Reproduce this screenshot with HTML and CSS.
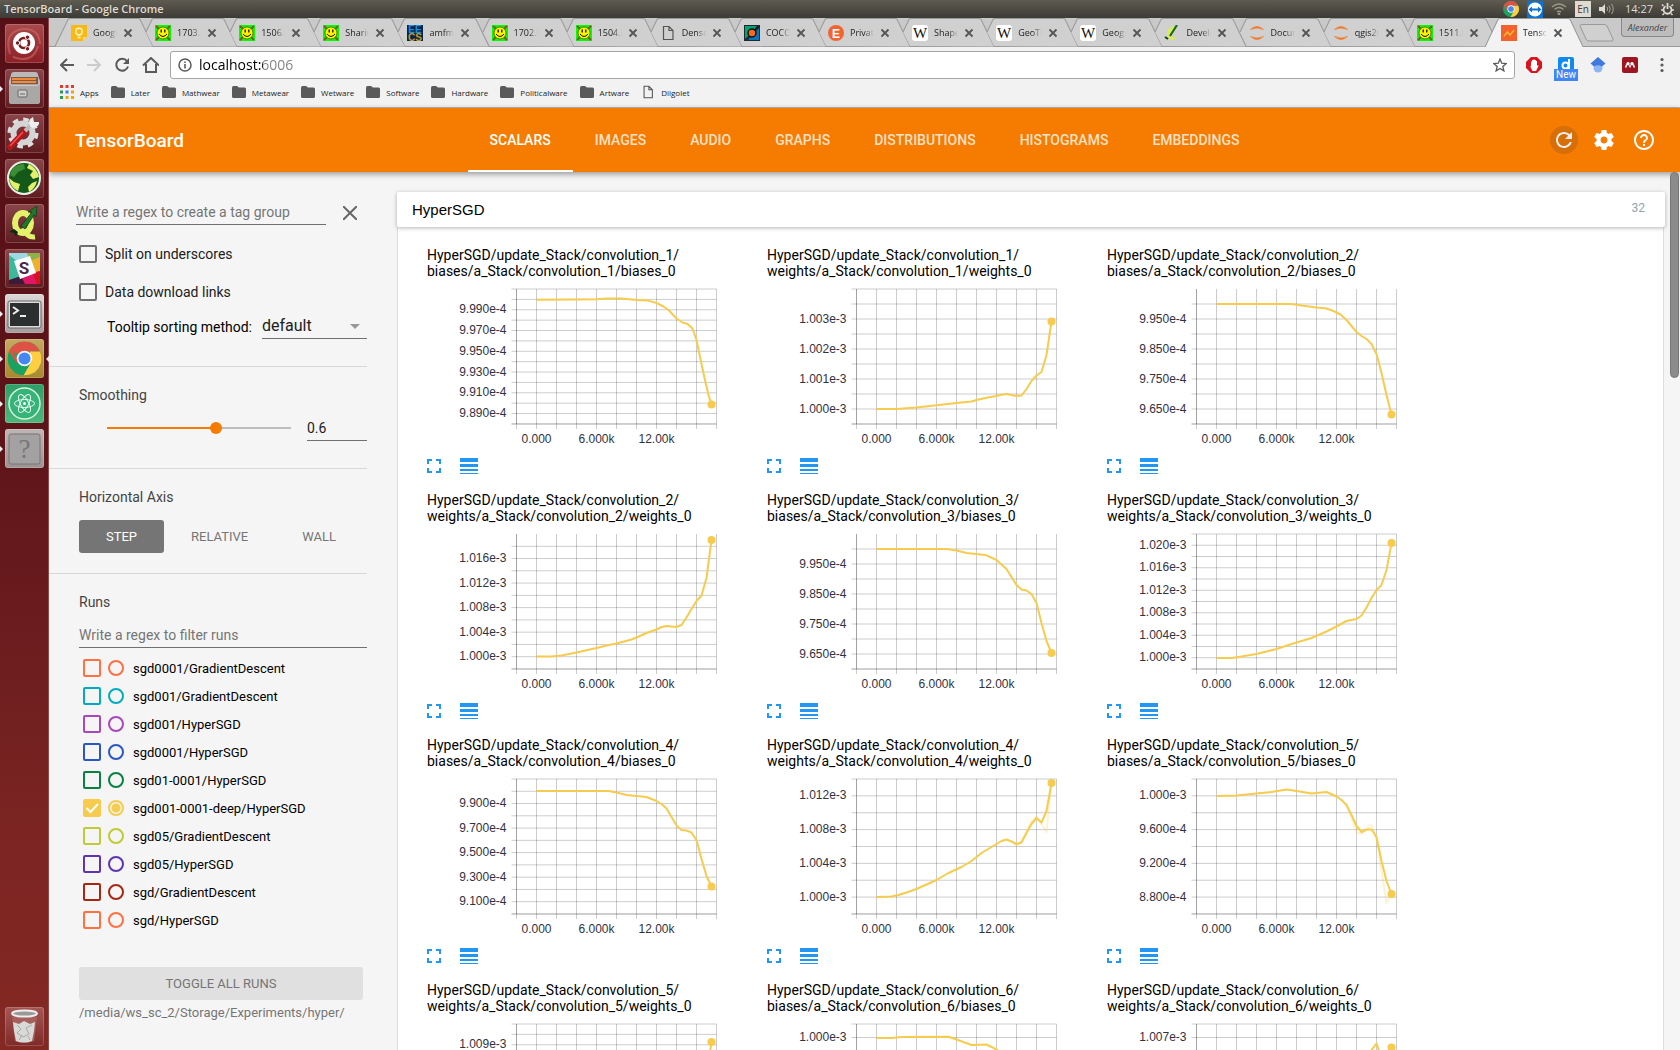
FILE: index.html
```html
<!DOCTYPE html>
<html lang="en">
<head>
<meta charset="utf-8">
<title>TensorBoard</title>
<link rel="stylesheet" href="styles.css">
</head>
<body>
<svg class="symbols" aria-hidden="true">
  <symbol id="tab-first" viewBox="0 0 98 29" preserveAspectRatio="none"><path d="M0 28.500 13 1.500Q13.500.500 15 .500H83Q84.500.500 85 1.500L98 28.500" fill="#d0d0d0" stroke="#999"/></symbol>
  <symbol id="tab" viewBox="0 0 98 29" preserveAspectRatio="none"><path d="M14 28 7 14 13 1.500Q13.500.500 15 .500H83Q84.500.500 85 1.500L98 28.500Z" fill="#d0d0d0"/><path d="M7 14 13 1.500Q13.500.500 15 .500H83Q84.500.500 85 1.500L98 28.500" fill="none" stroke="#999"/></symbol>
  <symbol id="tab-active" viewBox="0 0 98 29" preserveAspectRatio="none"><path d="M0 29 13 1.500Q13.500.500 15 .500H83Q84.500.500 85 1.500L98 29" fill="#f2f2f2" stroke="#999"/></symbol>
  <symbol id="cross" viewBox="0 0 10 10"><path d="M1.500 1.500 8.500 8.500M8.500 1.500 1.500 8.500" stroke="#555" stroke-width="1.800"/></symbol>
  <symbol id="fav-keep" viewBox="0 0 16 16"><path d="M0 0H16V12L12 16H0Z" fill="#f7b912"/><path d="M12 16V12H16Z" fill="#f9d779"/><circle cx="8" cy="6.500" r="3.200" fill="none" stroke="#fff3c8" stroke-width="1.400"/><path d="M6.500 10H9.500M6.500 12.500H9.500" stroke="#fff3c8" stroke-width="1.400"/></symbol>
  <symbol id="fav-arxiv" viewBox="0 0 16 16"><rect width="16" height="16" fill="#0f0"/><path d="M1 1 4 4M15 1 12 4M1 15 4 12M15 15 12 12" stroke="#7a5a20" stroke-width="2"/><circle cx="8" cy="8" r="6" fill="#fff200" stroke="#554400" stroke-width=".7"/><path d="M6.200 4.500V7.500M9.800 4.500V7.500" stroke="#111" stroke-width="1.300"/><path d="M4 9Q8 14 12 9" fill="none" stroke="#111"/></symbol>
  <symbol id="fav-page" viewBox="0 0 16 16"><path d="M3.500 1.500H9L13 5.500V14.500H3.500ZM9 1.500V5.500H13" fill="none" stroke="#555" stroke-width="1.200"/></symbol>
  <symbol id="fav-coco" viewBox="0 0 16 16"><rect width="16" height="16" fill="#1c2b33"/><path d="M1 1H14L1 14Z" fill="#00a66c"/><path d="M15 3V15H4Z" fill="#0a74b8"/><circle cx="8" cy="8" r="4" fill="#f26a21" stroke="#111" stroke-width="1.500"/><path d="M10.500 5.500 14 1" stroke="#111" stroke-width="1.500"/></symbol>
  <symbol id="fav-w" viewBox="0 0 16 16"><rect width="16" height="16" rx="3" fill="#fff"/><text x="8" y="13" text-anchor="middle" font-family="Liberation Serif, serif" font-size="15" fill="#111">W</text></symbol>
  <symbol id="fav-qgis" viewBox="0 0 16 16"><path d="M10 1Q3 3 3 9Q3 14 8 15Q13 14 11 12Q7 13 8 9Q9 5 12 3Z" fill="#d9ec5b"/><path d="M13 0 6 11" stroke="#1c6b1c" stroke-width="2.200"/><path d="M1 12 4 14" stroke="#143c14" stroke-width="2"/></symbol>
  <symbol id="fav-jupyter" viewBox="0 0 16 16"><path d="M1.500 4.500Q8-1.500 14.500 4.500Q8 1.500 1.500 4.500ZM1.500 11.500Q8 17.500 14.500 11.500Q8 14.500 1.500 11.500Z" fill="#f37726" stroke="#f37726" stroke-width=".6"/></symbol>
  <symbol id="fav-tb" viewBox="0 0 16 16"><rect width="16" height="16" fill="#f3622b"/><path d="M3 11 6.500 7 9 10 13 5" fill="none" stroke="#ffb733" stroke-width="1.500"/></symbol>
  <symbol id="folder" viewBox="0 0 14 12"><path d="M0 2Q0 0 1.500 0H5L7 1.500H12.500Q14 1.500 14 3V10.500Q14 12 12.500 12H1.500Q0 12 0 10.500Z" fill="#5a5a5a"/></symbol>
  <symbol id="chrome" viewBox="0 0 34 34"><circle cx="17" cy="17" r="17" fill="#1aa260"/><path d="M2.300 8.500A17 17 0 0 1 31.700 8.500L31.700 10H17L10 13Z" fill="#de5246"/><path d="M32.500 10A17 17 0 0 1 16 34L24 20 22 10Z" fill="#ffcd40"/><path d="M2.300 8.500 10.500 21" stroke="#de5246" stroke-width="3"/><circle cx="17" cy="17" r="7.800" fill="#f5f5f5"/><circle cx="17" cy="17" r="6" fill="#4587f3"/></symbol>
</svg>

<header class="panel">
  <span class="panel-title">TensorBoard - Google Chrome</span>
  <div class="panel-tray">
    <svg width="16" height="16"><use href="#chrome"/></svg>
    <svg width="16" height="17" viewBox="0 0 16 17"><rect width="16" height="17" fill="#0d72d2"/><circle cx="8" cy="8.500" r="7" fill="#fff"/><path d="M1.500 8.500 5 5.500V7.500H11V5.500L14.500 8.500 11 11.500V9.500H5V11.500Z" fill="#0d72d2"/></svg>
    <svg width="16" height="12" viewBox="0 0 16 12" fill="none" stroke="#9b978d" stroke-width="1.500"><path d="M1 4Q8-2 15 4M3.500 6.500Q8 2.500 12.500 6.500M6 9Q8 7.500 10 9"/><circle cx="8" cy="11" r=".6" fill="#dfdbd2"/></svg>
    <span class="panel-lang">En</span>
    <svg width="16" height="12" viewBox="0 0 16 12"><path d="M0 4H3L6 1V11L3 8H0Z" fill="#dfdbd2"/><path d="M8 4Q9.500 6 8 8M10 2.500Q12.500 6 10 9.500M12.500 1Q16 6 12.500 11" fill="none" stroke="#a9a59b"/></svg>
    <span class="panel-clock">14:27</span>
    <svg width="13" height="13" viewBox="0 0 13 13" fill="none" stroke="#dfdbd2"><path d="M4.500 3.300A4 4 0 1 0 8.500 3.300" stroke-width="1.800"/><path d="M6.500 0V6" stroke-width="1.800"/><path d="M2.500 3 1 1.500M10.500 3 12 1.500M2 7H0M11 7H13M3 10.500 1.500 12M10 10.500 11.500 12" stroke-width="1.500"/></svg>
  </div>
</header>

<div class="desktop">
<nav class="launcher" aria-label="Launcher">
  <a class="tile ubuntu" href="#" aria-label="Dash"><svg viewBox="0 0 39 39"><path d="M5 30Q-2 8 18 5Q34 4 35 20M8 33Q28 40 33 22" fill="none" stroke="#cf6a68" stroke-width="2" opacity=".6"/><circle cx="19" cy="19" r="11" fill="#fff"/><circle cx="19" cy="19" r="5" fill="none" stroke="#7b1c20" stroke-width="2.600"/><g fill="#7b1c20" stroke="#fff"><circle cx="12.500" cy="19" r="2.200"/><circle cx="22.500" cy="13.200" r="2.200"/><circle cx="22.500" cy="24.800" r="2.200"/></g></svg></a>
  <a class="tile running" href="#" aria-label="Files"><svg viewBox="0 0 39 39"><path d="M6 6Q6 3 9 3H30Q33 3 33 6L35 12V32Q35 35 32 35H7Q4 35 4 32V12Z" fill="#bcbab8"/><path d="M6 8H33V16H6Z" fill="#7b5c4c"/><path d="M7 10H31M7 13H31" stroke="#f08a3c" stroke-width="2"/><path d="M4 16H35V32Q35 35 32 35H7Q4 35 4 32Z" fill="#a9a8a7"/><path d="M6 16H33" stroke="#e6e6e6"/><rect x="13" y="21" width="9" height="7" rx="1" fill="#ccc" stroke="#666"/><path d="M15 25H20" stroke="#666"/></svg></a>
  <a class="tile" href="#" aria-label="Settings"><svg viewBox="0 0 39 39"><circle cx="18" cy="19" r="12" fill="none" stroke="#ddd" stroke-width="7" stroke-dasharray="5 4.400"/><circle cx="18" cy="19" r="9.500" fill="none" stroke="#d5d5d5" stroke-width="6"/><path d="M5 33 20 17" stroke="#b3161b" stroke-width="6" stroke-linecap="round"/><path d="M5 32 18 18" stroke="#ef5350" stroke-width="1.500"/><path d="M20 17 26 11" stroke="#bbb" stroke-width="4"/><path d="M25 12Q22 6 28 3L29 8 34 8Q35 13 27 14Z" fill="#eee"/></svg></a>
  <a class="tile" href="#" aria-label="Globe"><svg viewBox="0 0 39 39"><circle cx="19" cy="19" r="16" fill="#14591a" stroke="#e9efe5" stroke-width="2"/><path d="M24 5Q32 9 34 18L28 20 25 16 28 12 22 9ZM4 19 9 23 15 25 13 32Q5 28 4 19ZM27 24 32 22Q30 30 24 33L23 28Z" fill="#e2f06a"/><path d="M7 10Q12 5 19 5L20 10 13 13 9 18 5 16Z" fill="#3d8d35"/></svg></a>
  <a class="tile" href="#" aria-label="QGIS"><svg viewBox="0 0 39 39"><ellipse cx="18" cy="19" rx="8" ry="10" fill="none" stroke="#e3f26b" stroke-width="6"/><path d="M18 24Q22 34 30 33" fill="none" stroke="#e3f26b" stroke-width="5"/><path d="M16 22 27 8 23 8 32 2 31 13 29 11 20 25Z" fill="#23772c" stroke="#0d3b14" stroke-width=".7"/><path d="M4 28 9 29 11 33 13 28 9 25Z" fill="#0e2d10"/></svg></a>
  <a class="tile" href="#" aria-label="Slack"><svg viewBox="0 0 39 39"><path d="M4 4H24L28 16 4 20Z" fill="#9cd9e0"/><path d="M4 6 12 12 15 35H4Z" fill="#3cb99a"/><path d="M22 4H35V24L29 27Z" fill="#ecb22e"/><path d="M22 4H35V8L25 12Z" fill="#8fb04d"/><path d="M12 29 34 22V35H10Z" fill="#e01765"/><path d="M4 31 16 27 20 35H4Z" fill="#3d1a3c"/><path d="M28 25 35 22V35H32Z" fill="#d8121c"/><path d="M9 12 25 7 31 24 15 30Z" fill="#fff"/><text x="19" y="25" text-anchor="middle" font-size="17" font-weight="700" fill="#4b2a4e">S</text></svg></a>
  <a class="tile terminal running" href="#" aria-label="Terminal"><svg viewBox="0 0 39 39"><rect x="3" y="7" width="33" height="27" rx="2" fill="#ddd" stroke="#666"/><rect x="5" y="9" width="29" height="23" fill="#2c2f2f"/><path d="M8 13 13 16.500 8 20M15 22H21" fill="none" stroke="#eee" stroke-width="2"/></svg></a>
  <a class="tile chrome running focused" href="#" aria-label="Google Chrome"><svg viewBox="-2.500 -2.500 39 39"><use href="#chrome" width="34" height="34"/></svg></a>
  <a class="tile atom running" href="#" aria-label="Atom"><svg viewBox="0 0 39 39"><circle cx="19.500" cy="19.500" r="15.500" fill="#35b378" stroke="#d7f3df" stroke-width="1.500"/><g fill="none" stroke="#e9fbef" stroke-width="1"><ellipse cx="19.500" cy="19.500" rx="10" ry="4"/><ellipse cx="19.500" cy="19.500" rx="10" ry="4" transform="rotate(60 19.500 19.500)"/><ellipse cx="19.500" cy="19.500" rx="10" ry="4" transform="rotate(120 19.500 19.500)"/></g><circle cx="19.500" cy="19.500" r="1.500" fill="#fff"/></svg></a>
  <a class="tile unknown running" href="#" aria-label="Unknown application"><svg viewBox="0 0 39 39"><rect x="4" y="5" width="31" height="30" rx="2" fill="#a3a1a1" stroke="#777"/><text x="19.500" y="29" text-anchor="middle" font-family="Liberation Serif, serif" font-size="27" fill="#777">?</text></svg></a>
  <a class="tile trash" href="#" aria-label="Trash"><svg viewBox="0 0 39 39"><path d="M7 10 10 34Q19 38 29 34L32 10Z" fill="#a55f5c"/><path d="M8 15 14 17 19 14 25 17 30 15 29 24 27 34Q19 37 11 34L9 24Z" fill="#d9d9d7"/><path d="M12 18 16 22 12 26 18 30 24 27 21 21 27 18M14 33 17 28M25 33 23 29" fill="none" stroke="#aaa"/><ellipse cx="19.500" cy="6.500" rx="12.500" ry="3" fill="#999" stroke="#eee" stroke-width="2"/></svg></a>
</nav>

<div class="browser">
  <div class="tabstrip">
    <div class="tabs">
      <div class="tab"><svg class="tab-bg"><use href="#tab-first"/></svg><svg class="fav"><use href="#fav-keep"/></svg><span class="tab-title">Google</span><button class="tab-close" aria-label="Close tab"><svg><use href="#cross"/></svg></button></div>
      <div class="tab"><svg class="tab-bg"><use href="#tab"/></svg><svg class="fav"><use href="#fav-arxiv"/></svg><span class="tab-title">1703.0</span><button class="tab-close" aria-label="Close tab"><svg><use href="#cross"/></svg></button></div>
      <div class="tab"><svg class="tab-bg"><use href="#tab"/></svg><svg class="fav"><use href="#fav-arxiv"/></svg><span class="tab-title">1506.0</span><button class="tab-close" aria-label="Close tab"><svg><use href="#cross"/></svg></button></div>
      <div class="tab"><svg class="tab-bg"><use href="#tab"/></svg><svg class="fav"><use href="#fav-arxiv"/></svg><span class="tab-title">Sharin</span><button class="tab-close" aria-label="Close tab"><svg><use href="#cross"/></svg></button></div>
      <div class="tab"><svg class="tab-bg"><use href="#tab"/></svg><svg class="fav" viewBox="0 0 16 16"><rect width="16" height="16" fill="#04244a"/><text x="8" y="7.500" text-anchor="middle" font-size="10" font-weight="700" fill="#1b8fe0">EE</text><text x="8" y="15.500" text-anchor="middle" font-size="10" font-weight="700" fill="#c79a2c">CS</text></svg><span class="tab-title">amfm_</span><button class="tab-close" aria-label="Close tab"><svg><use href="#cross"/></svg></button></div>
      <div class="tab"><svg class="tab-bg"><use href="#tab"/></svg><svg class="fav"><use href="#fav-arxiv"/></svg><span class="tab-title">1702.0</span><button class="tab-close" aria-label="Close tab"><svg><use href="#cross"/></svg></button></div>
      <div class="tab"><svg class="tab-bg"><use href="#tab"/></svg><svg class="fav"><use href="#fav-arxiv"/></svg><span class="tab-title">1504.0</span><button class="tab-close" aria-label="Close tab"><svg><use href="#cross"/></svg></button></div>
      <div class="tab"><svg class="tab-bg"><use href="#tab"/></svg><svg class="fav"><use href="#fav-page"/></svg><span class="tab-title">Dense</span><button class="tab-close" aria-label="Close tab"><svg><use href="#cross"/></svg></button></div>
      <div class="tab"><svg class="tab-bg"><use href="#tab"/></svg><svg class="fav"><use href="#fav-coco"/></svg><span class="tab-title">COCO</span><button class="tab-close" aria-label="Close tab"><svg><use href="#cross"/></svg></button></div>
      <div class="tab"><svg class="tab-bg"><use href="#tab"/></svg><svg class="fav" viewBox="0 0 16 16"><circle cx="8" cy="8" r="8" fill="#f26531"/><text x="8" y="12.500" text-anchor="middle" font-size="12" font-weight="700" fill="#fff">E</text></svg><span class="tab-title">Privat</span><button class="tab-close" aria-label="Close tab"><svg><use href="#cross"/></svg></button></div>
      <div class="tab"><svg class="tab-bg"><use href="#tab"/></svg><svg class="fav"><use href="#fav-w"/></svg><span class="tab-title">Shape</span><button class="tab-close" aria-label="Close tab"><svg><use href="#cross"/></svg></button></div>
      <div class="tab"><svg class="tab-bg"><use href="#tab"/></svg><svg class="fav"><use href="#fav-w"/></svg><span class="tab-title">GeoTIF</span><button class="tab-close" aria-label="Close tab"><svg><use href="#cross"/></svg></button></div>
      <div class="tab"><svg class="tab-bg"><use href="#tab"/></svg><svg class="fav"><use href="#fav-w"/></svg><span class="tab-title">Geogr</span><button class="tab-close" aria-label="Close tab"><svg><use href="#cross"/></svg></button></div>
      <div class="tab"><svg class="tab-bg"><use href="#tab"/></svg><svg class="fav"><use href="#fav-qgis"/></svg><span class="tab-title">Develo</span><button class="tab-close" aria-label="Close tab"><svg><use href="#cross"/></svg></button></div>
      <div class="tab"><svg class="tab-bg"><use href="#tab"/></svg><svg class="fav"><use href="#fav-jupyter"/></svg><span class="tab-title">Docum</span><button class="tab-close" aria-label="Close tab"><svg><use href="#cross"/></svg></button></div>
      <div class="tab"><svg class="tab-bg"><use href="#tab"/></svg><svg class="fav"><use href="#fav-jupyter"/></svg><span class="tab-title">qgis2t</span><button class="tab-close" aria-label="Close tab"><svg><use href="#cross"/></svg></button></div>
      <div class="tab"><svg class="tab-bg"><use href="#tab"/></svg><svg class="fav"><use href="#fav-arxiv"/></svg><span class="tab-title">1511.0</span><button class="tab-close" aria-label="Close tab"><svg><use href="#cross"/></svg></button></div>
      <div class="tab active"><svg class="tab-bg"><use href="#tab-active"/></svg><svg class="fav"><use href="#fav-tb"/></svg><span class="tab-title">Tenso</span><button class="tab-close" aria-label="Close tab"><svg><use href="#cross"/></svg></button></div>
    </div>
    <button class="new-tab" aria-label="New tab"><svg width="36" height="18" viewBox="0 0 36 18"><path d="M1 2Q1 .500 3 .500H25Q27 .500 28 2L34 15Q34.500 17 33 17H10Q8 17 7 15Z" fill="#d0d0d0" stroke="#999"/></svg></button>
    <button class="profile">Alexander</button>
  </div>

  <div class="toolbar">
    <button aria-label="Back"><svg width="16" height="16" viewBox="0 0 16 16"><path d="M14 8H1M7 2 1 8 7 14" fill="none" stroke="#5a5a5a" stroke-width="2"/></svg></button>
    <button aria-label="Forward"><svg width="16" height="16" viewBox="0 0 16 16"><path d="M0 8H13M7 2 13 8 7 14" fill="none" stroke="#ccc" stroke-width="2"/></svg></button>
    <button aria-label="Reload"><svg width="16" height="16" viewBox="0 0 16 16"><path d="M13 4A6 6 0 1 0 14 9.500" fill="none" stroke="#5a5a5a" stroke-width="2"/><path d="M15 1V7H9Z" fill="#5a5a5a"/></svg></button>
    <button aria-label="Home"><svg width="18" height="16" viewBox="0 0 18 16"><path d="M2 8.500 10 1 18 8.500M5 7V15H15V7" fill="none" stroke="#5a5a5a" stroke-width="2"/></svg></button>
    <div class="omnibox">
      <svg width="14" height="14" viewBox="0 0 14 14"><circle cx="7" cy="7" r="6" fill="none" stroke="#5a5a5a" stroke-width="1.500"/><path d="M7 6V10.500M7 3.500V5" stroke="#5a5a5a" stroke-width="1.600"/></svg>
      <input class="url" type="text" value="localhost:6006" aria-label="Address">
      <svg width="14" height="14" viewBox="0 0 14 14"><path d="M7 1 8.700 5.200 13.200 5.500 9.800 8.400 10.900 12.900 7 10.400 3.100 12.900 4.200 8.400 .8 5.500 5.300 5.200Z" fill="none" stroke="#5a5a5a" stroke-width="1.300"/></svg>
    </div>
    <div class="extensions">
      <button aria-label="Blocker"><svg width="16" height="16" viewBox="0 0 16 16"><path d="M5 0H11L16 5V11L11 16H5L0 11V5Z" fill="#d9141e"/><path d="M5 8V4.500H6V3H7.300V2.500H8.600V3H9.900V4H11V9L12 8 12.500 9 10 14H6.500L4.500 10Z" fill="#fff"/></svg></button>
      <button class="diigo" aria-label="Diigo"><svg width="16" height="16" viewBox="0 0 16 16"><rect width="16" height="16" rx="2" fill="#0f8bf0"/><circle cx="7.500" cy="8.500" r="3" fill="none" stroke="#fff" stroke-width="2"/><path d="M11 2V12" stroke="#fff" stroke-width="2"/></svg><span class="diigo-badge">New</span></button>
      <button aria-label="Scholar"><svg width="16" height="16" viewBox="0 0 16 16"><circle cx="8" cy="11" r="4.500" fill="#8fb4f2"/><path d="M8 0 15.500 6.500 12 9.500Q8 7 4 9.500L.5 6.500Z" fill="#3f78e0"/></svg></button>
      <button aria-label="Mendeley"><svg width="16" height="16" viewBox="0 0 16 16"><rect width="16" height="16" rx="2" fill="#9d1620"/><path d="M3.500 10.500Q4.500 9 4.500 7.500M11.500 7.500Q11.500 9 12.500 10.500M8 8V10.500" fill="none" stroke="#fff" stroke-width="1.500"/><circle cx="6" cy="6.800" r="1.700" fill="#fff"/><circle cx="10" cy="6.800" r="1.700" fill="#fff"/></svg></button>
      <button aria-label="Menu"><svg width="16" height="16" viewBox="0 0 16 16" fill="#5a5a5a"><circle cx="8" cy="2.500" r="1.600"/><circle cx="8" cy="8" r="1.600"/><circle cx="8" cy="13.500" r="1.600"/></svg></button>
    </div>
  </div>

  <nav class="bookmarks" aria-label="Bookmarks">
    <a href="#"><svg width="14" height="14" viewBox="0 0 14 14"><path d="M0 0H3V3H0ZM5.500 0H8.500V3H5.500ZM11 0H14V3H11Z" fill="#e33b2e"/><path d="M0 5.500H3V8.500H0Z" fill="#2c9a56"/><path d="M5.500 5.500H8.500V8.500H5.500Z" fill="#3f7ee8"/><path d="M11 5.500H14V8.500H11Z" fill="#f2a600"/><path d="M0 11H3V14H0Z" fill="#2c9a56"/><path d="M5.500 11H8.500V14H5.500ZM11 11H14V14H11Z" fill="#f2a600"/></svg>Apps</a>
    <a href="#"><svg width="14" height="12"><use href="#folder"/></svg>Later</a>
    <a href="#"><svg width="14" height="12"><use href="#folder"/></svg>Mathwear</a>
    <a href="#"><svg width="14" height="12"><use href="#folder"/></svg>Metawear</a>
    <a href="#"><svg width="14" height="12"><use href="#folder"/></svg>Wetware</a>
    <a href="#"><svg width="14" height="12"><use href="#folder"/></svg>Software</a>
    <a href="#"><svg width="14" height="12"><use href="#folder"/></svg>Hardware</a>
    <a href="#"><svg width="14" height="12"><use href="#folder"/></svg>Politicalware</a>
    <a href="#"><svg width="14" height="12"><use href="#folder"/></svg>Artware</a>
    <a href="#"><svg width="14" height="16"><use href="#fav-page"/></svg>Diigolet</a>
  </nav>

  <div class="page">
    <header class="tb-header">
      <h1>TensorBoard</h1>
      <nav class="tb-tabs">
        <a class="selected" href="#">SCALARS</a><a href="#">IMAGES</a><a href="#">AUDIO</a><a href="#">GRAPHS</a><a href="#">DISTRIBUTIONS</a><a href="#">HISTOGRAMS</a><a href="#">EMBEDDINGS</a>
      </nav>
      <div class="tb-actions">
        <button class="refresh" aria-label="Reload data"><svg width="24" height="24" viewBox="0 0 24 24"><path d="M17.650 6.350C16.200 4.900 14.210 4 12 4c-4.420 0-7.990 3.580-7.990 8s3.570 8 7.990 8c3.730 0 6.840-2.550 7.730-6h-2.080c-.82 2.330-3.040 4-5.650 4-3.310 0-6-2.690-6-6s2.690-6 6-6c1.660 0 3.140.69 4.220 1.780L13 11h7V4l-2.350 2.350z" fill="#eee"/></svg></button>
        <button aria-label="Settings"><svg width="24" height="24" viewBox="0 0 24 24"><path d="M19.430 12.980c.04-.32.070-.64.070-.98s-.03-.66-.07-.98l2.110-1.650c.19-.15.24-.42.120-.64l-2-3.460c-.12-.22-.39-.3-.61-.22l-2.490 1c-.52-.4-1.080-.73-1.690-.98l-.38-2.650C14.460 2.180 14.250 2 14 2h-4c-.25 0-.46.180-.49.420l-.38 2.650c-.61.250-1.170.590-1.690.980l-2.490-1c-.23-.09-.49 0-.61.220l-2 3.460c-.13.220-.07.490.120.640l2.110 1.650c-.04.320-.07.650-.07.980s.03.660.07.980l-2.110 1.650c-.19.150-.24.420-.12.640l2 3.460c.12.220.39.300.61.220l2.490-1c.52.400 1.080.730 1.690.980l.38 2.650c.03.240.24.420.49.420h4c.25 0 .46-.18.490-.42l.38-2.650c.61-.25 1.170-.59 1.690-.98l2.490 1c.23.090.49 0 .61-.22l2-3.460c.12-.22.070-.49-.12-.64l-2.110-1.650zM12 15.500c-1.930 0-3.500-1.570-3.500-3.500s1.570-3.500 3.500-3.500 3.500 1.570 3.500 3.500-1.570 3.500-3.500 3.500z" fill="#fff"/></svg></button>
        <button aria-label="Help"><svg width="24" height="24" viewBox="0 0 24 24"><path d="M11 18h2v-2h-2v2zm1-16C6.480 2 2 6.480 2 12s4.480 10 10 10 10-4.480 10-10S17.520 2 12 2zm0 18c-4.410 0-8-3.590-8-8s3.590-8 8-8 8 3.590 8 8-3.590 8-8 8zm0-14c-2.210 0-4 1.790-4 4h2c0-1.100.9-2 2-2s2 .9 2 2c0 2-3 1.750-3 5h2c0-2.250 3-2.500 3-5 0-2.210-1.790-4-4-4z" fill="#fff"/></svg></button>
      </div>
    </header>

    <div class="dashboard">
      <aside class="sidebar">
        <section class="options">
          <div class="tag-group"><input class="field" type="text" placeholder="Write a regex to create a tag group" aria-label="Tag group regex"><button aria-label="Clear"><svg width="14" height="14" viewBox="0 0 14 14"><path d="M0 0 14 14M14 0 0 14" stroke="#666" stroke-width="2"/></svg></button></div>
          <label class="check-row"><input class="box" type="checkbox">Split on underscores</label>
          <label class="check-row"><input class="box" type="checkbox">Data download links</label>
          <div class="tooltip-row"><label for="sorting">Tooltip sorting method:</label><span class="select-wrap"><select id="sorting"><option>default</option></select><svg width="10" height="5" viewBox="0 0 10 5"><path d="M0 0H10L5 5Z" fill="#999"/></svg></span></div>
        </section>
        <section class="smoothing">
          <h2><label for="smooth">Smoothing</label></h2>
          <div class="smooth-row"><input id="smooth" type="range" min="0" max="1" step="0.1" value="0.6"><input class="field" type="text" value="0.6" aria-label="Smoothing value"></div>
        </section>
        <section class="axis">
          <h2>Horizontal Axis</h2>
          <div class="axis-row"><button class="selected">STEP</button><button>RELATIVE</button><button>WALL</button></div>
        </section>
        <section class="runs">
          <h2>Runs</h2>
          <input class="field" type="text" placeholder="Write a regex to filter runs" aria-label="Filter runs">
          <ul>
            <li class="coral"><input class="box" type="checkbox" id="r0"><input class="ring" type="radio" name="run" aria-label="Only sgd0001/GradientDescent"><label for="r0">sgd0001/GradientDescent</label></li>
            <li class="cyan"><input class="box" type="checkbox" id="r1"><input class="ring" type="radio" name="run" aria-label="Only sgd001/GradientDescent"><label for="r1">sgd001/GradientDescent</label></li>
            <li class="magenta"><input class="box" type="checkbox" id="r2"><input class="ring" type="radio" name="run" aria-label="Only sgd001/HyperSGD"><label for="r2">sgd001/HyperSGD</label></li>
            <li class="blue"><input class="box" type="checkbox" id="r3"><input class="ring" type="radio" name="run" aria-label="Only sgd0001/HyperSGD"><label for="r3">sgd0001/HyperSGD</label></li>
            <li class="green"><input class="box" type="checkbox" id="r4"><input class="ring" type="radio" name="run" aria-label="Only sgd01-0001/HyperSGD"><label for="r4">sgd01-0001/HyperSGD</label></li>
            <li class="yellow"><input class="box" type="checkbox" id="r5" checked><input class="ring" type="radio" name="run" checked aria-label="Only sgd001-0001-deep/HyperSGD"><label for="r5">sgd001-0001-deep/HyperSGD</label><svg class="tick" width="18" height="18" viewBox="0 0 18 18"><path d="M3.500 9 7.500 13 15 5" fill="none" stroke="#fff" stroke-width="2"/></svg></li>
            <li class="lime"><input class="box" type="checkbox" id="r6"><input class="ring" type="radio" name="run" aria-label="Only sgd05/GradientDescent"><label for="r6">sgd05/GradientDescent</label></li>
            <li class="violet"><input class="box" type="checkbox" id="r7"><input class="ring" type="radio" name="run" aria-label="Only sgd05/HyperSGD"><label for="r7">sgd05/HyperSGD</label></li>
            <li class="brick"><input class="box" type="checkbox" id="r8"><input class="ring" type="radio" name="run" aria-label="Only sgd/GradientDescent"><label for="r8">sgd/GradientDescent</label></li>
            <li class="coral"><input class="box" type="checkbox" id="r9"><input class="ring" type="radio" name="run" aria-label="Only sgd/HyperSGD"><label for="r9">sgd/HyperSGD</label></li>
          </ul>
          <button class="toggle-all">TOGGLE ALL RUNS</button>
          <p class="logdir">/media/ws_sc_2/Storage/Experiments/hyper/</p>
        </section>
      </aside>

      <main class="content">
        <button class="group-header"><span class="group-name">HyperSGD</span><span class="group-count">32</span></button>
        <div class="cards" id="cards"></div>
      </main>
    </div>
    <div class="scroll-thumb"></div>
  </div>
</div>
</div>
<script src="charts.js"></script>
</body>
</html>
```
FILE: styles.css
```css
* { box-sizing: border-box; }
body {
  margin: 0;
  height: 100vh;
  overflow: hidden;
  display: flex;
  flex-direction: column;
  font-family: Roboto, "Liberation Sans", sans-serif;
  font-size: 14px;
  color: #212121;
}
button, input, select { font: inherit; color: inherit; margin: 0; padding: 0; border: 0; background: none; outline: 0; }
button { display: flex; align-items: center; justify-content: center; }
a { color: inherit; text-decoration: none; }
h1, h2, p, ul { margin: 0; padding: 0; font-weight: 400; list-style: none; }
svg { display: block; flex: none; }
.symbols { display: none; }

/* desktop panel */
.panel {
  flex: none;
  height: 18px;
  padding: 0 6px 0 4px;
  display: flex;
  align-items: center;
  justify-content: space-between;
  background: linear-gradient(#5e5b50, #3d3b36);
  color: #dfdbd2;
  font: 12px/18px "Open Sans", sans-serif;
}
.panel-title { font-weight: 600; font-size: 11px; }
.panel-tray { display: flex; align-items: center; gap: 8px; }
.panel-lang { background: #dfdbd2; color: #3c3b37; font-size: 10px; line-height: 16px; padding: 0 2px; }
.panel-clock { margin-left: 2px; font-size: 11px; }

.desktop { flex: 1; min-height: 0; display: flex; }
.launcher {
  flex: none;
  width: 49px;
  padding: 6px 5px 4px;
  display: flex;
  flex-direction: column;
  gap: 6px;
  background: linear-gradient(#560f16, #5c1419 40%, #7c2523 80%, #842822);
  border-right: 1px solid #8d4a48;
}
.tile {
  position: relative;
  flex: none;
  width: 39px;
  height: 39px;
  border-radius: 3px;
  background: linear-gradient(#8a4549, #5f1d22);
  box-shadow: inset 0 0 0 1px rgba(255, 255, 255, .18);
}
.tile svg { width: 39px; height: 39px; }
.tile.ubuntu { background: linear-gradient(#a84a4c, #8c2026); }
.tile.terminal { background: linear-gradient(#dcd8d8, #a59c9c); }
.tile.chrome { background: linear-gradient(#c4a962, #a8892f); }
.tile.atom { background: linear-gradient(#2f9f68, #4bb77b); }
.tile.unknown { background: linear-gradient(#c0b5b5, #9d9292); }
.tile.trash { margin-top: auto; background: linear-gradient(#a55754, #7f2a28); }
.running::before, .focused::after {
  content: "";
  position: absolute;
  top: 17px;
  left: -5px;
  border: 3px solid transparent;
  border-left-color: #eee;
  border-right: 0;
}
.focused::after { left: auto; right: -5px; border: 3px solid transparent; border-right-color: #eee; border-left: 0; }

/* browser chrome */
.browser { flex: 1; min-width: 0; display: flex; flex-direction: column; font-family: "Open Sans", sans-serif; }
.tabstrip { flex: none; height: 29px; padding: 0 6px; display: flex; align-items: flex-start; background: #c9c9c9; border-bottom: 1px solid #999; }
.tabs { flex: 1; min-width: 0; display: flex; padding-right: 14px; }
.tab { position: relative; flex: 1 1 0; min-width: 0; margin-right: -14px; height: 29px; padding: 0 20px 0 16px; display: flex; align-items: center; gap: 6px; }
.tab > * { position: relative; }
.tab .tab-bg { position: absolute; inset: 0; width: 100%; height: 29px; overflow: visible; }
.fav { width: 16px; height: 16px; font-family: "Liberation Sans", sans-serif; }
.tab-title { flex: 1; min-width: 0; overflow: hidden; white-space: nowrap; font-size: 9px; line-height: 14px; color: #222; -webkit-mask-image: linear-gradient(90deg, #000 60%, transparent); mask-image: linear-gradient(90deg, #000 60%, transparent); }
.tab-close svg { width: 10px; height: 10px; }
.new-tab { margin: 6px 6px 0 -4px; }
.profile { min-width: 53px; height: 19px; background: #bdbdbd; border: 1px solid #888; border-top: 0; border-radius: 0 0 4px 4px; font-size: 9px; font-style: italic; color: #444; }

.toolbar { flex: none; display: flex; align-items: center; gap: 11px; padding: 4px 10px 0 11px; background: #f2f2f2; }
.omnibox { flex: 1; display: flex; align-items: center; gap: 7px; height: 28px; padding: 0 7px; background: #fff; border: 1px solid #a6a6a6; border-radius: 3px; }
.url { flex: 1; padding-bottom: 2px; font-size: 14px; color: transparent; background: linear-gradient(90deg, #000 64px, #808080 64px); -webkit-background-clip: text; background-clip: text; }
.extensions { display: flex; gap: 16px; }
.diigo { position: relative; }
.diigo-badge { position: absolute; left: -4px; top: 12px; width: 24px; background: #4285f4; color: #fff; font: 10px/12px Roboto, sans-serif; text-align: center; }

.bookmarks { flex: none; height: 29px; padding: 0 11px 2px; display: flex; align-items: center; gap: 12px; background: #f2f2f2; border-bottom: 1px solid #b5b5b5; font-size: 8px; color: #222; }
.bookmarks a { display: flex; align-items: center; gap: 6px; }

/* TensorBoard */
.page { position: relative; flex: 1; min-height: 0; display: flex; flex-direction: column; background: #f5f5f5; font-family: Roboto, "Liberation Sans", sans-serif; }
.tb-header { position: relative; z-index: 1; flex: none; height: 64px; padding: 0 24px; display: grid; grid-template-columns: 1fr auto 1fr; background: #f57c00; color: #fff; box-shadow: 0 2px 6px rgba(0, 0, 0, .4); }
.tb-header h1 { align-self: center; padding-left: 2px; font-size: 19px; font-weight: 500; }
.tb-tabs { display: flex; font-weight: 500; }
.tb-tabs a { display: flex; align-items: center; padding: 0 22px; color: rgba(255, 255, 255, .78); }
.tb-tabs .selected { color: #fff; box-shadow: inset 0 -2px #fff; }
.tb-actions { display: flex; align-items: center; justify-content: flex-end; gap: 16px; }
.refresh { width: 28px; height: 28px; margin-right: -2px; border-radius: 50%; background: #d66f08; }

.dashboard { flex: 1; min-height: 0; display: flex; overflow: hidden; }
.sidebar { flex: none; width: 348px; padding-right: 30px; }
.sidebar section { padding: 18px 0 0 30px; border-bottom: 1px solid #d8d8d8; }
.sidebar section:last-child { border-bottom: 0; }
.sidebar h2 { font-size: 14px; line-height: 20px; color: #444; }
.field { width: 100%; border-bottom: 1px solid #707070; }
.field::placeholder { color: #757575; opacity: 1; }

.sidebar .options { padding: 24px 0 27px 27px; }
.tag-group { display: flex; align-items: center; gap: 17px; padding-right: 10px; }
.tag-group .field { flex: 1; height: 29px; padding-top: 4px; }
.tag-group button { padding-top: 4px; }
.check-row { display: flex; align-items: center; gap: 8px; height: 18px; margin: 20px 0 0 3px; }
.box { appearance: none; flex: none; width: 18px; height: 18px; border: 2px solid currentColor; border-radius: 2px; }
.check-row .box { color: #707070; }
.tooltip-row { display: flex; align-items: center; gap: 10px; margin: 12px 0 0 31px; color: #000; }
.tooltip-row label { padding-top: 2px; }
.select-wrap { position: relative; flex: 1; }
.select-wrap select { appearance: none; display: block; width: 100%; height: 26px; border-bottom: 1px solid #707070; font-size: 16px; color: #212121; }
.select-wrap svg { position: absolute; right: 7px; top: 11px; pointer-events: none; }

.sidebar .smoothing { padding-bottom: 27px; }
.smooth-row { display: flex; align-items: center; gap: 16px; margin: 11px 0 0 28px; }
.smooth-row .field { width: 60px; height: 25px; }
#smooth { appearance: none; flex: 1; min-width: 0; height: 12px; margin-bottom: 2px; background: linear-gradient(90deg, #f57c00 60%, #bdbdbd 60%) center / 100% 2px no-repeat; }
#smooth::-webkit-slider-thumb { appearance: none; width: 12px; height: 12px; border-radius: 50%; background: #f57c00; }

.sidebar .axis { padding-bottom: 20px; }
.axis-row { display: flex; margin-top: 13px; }
.axis-row button { height: 33px; padding: 0 27px; font-size: 13px; color: #757575; border-radius: 3px; }
.axis-row .selected { background: #757575; color: #fff; }

.runs .field { height: 27px; margin-top: 9px; padding-top: 2px; }
.runs ul { margin-top: 6px; font-size: 13px; }
.runs li { position: relative; display: flex; align-items: center; height: 28px; padding-left: 4px; }
.runs label { color: #000; margin-left: 9px; }
.ring { appearance: none; flex: none; width: 16px; height: 16px; margin-left: 7px; border: 2px solid currentColor; border-radius: 50%; }
.ring:checked { background: radial-gradient(currentColor 4px, transparent 5px); }
.box:checked { background: currentColor; }
.tick { position: absolute; left: 4px; pointer-events: none; }
.coral { color: #ff7043; }
.cyan { color: #00acc1; }
.magenta { color: #ab47bc; }
.blue { color: #2a56c6; }
.green { color: #0b8043; }
.yellow { color: #f7cb4d; }
.lime { color: #c0ca33; }
.violet { color: #5e35b1; }
.brick { color: #a52714; }
.toggle-all { width: 284px; height: 33px; margin-top: 33px; border-radius: 3px; background: #e0e0e0; color: #757575; font-size: 13px; }
.logdir { margin-top: 3px; line-height: 20px; font-size: 13px; color: #757575; }

.content { flex: 1; min-width: 0; padding: 20px 15px 0 0; }
.group-header { position: relative; width: 100%; height: 35px; padding: 0 20px 0 15px; justify-content: space-between; background: #fff; border-radius: 2px; box-shadow: 0 1px 4px rgba(0, 0, 0, .3); }
.group-name { font: 15px "Liberation Sans", sans-serif; color: #000; }
.group-count { padding-bottom: 3px; font-size: 12px; color: #90a4ae; }
.cards { margin: 0 1px 0 0; padding: 20px 0 0 29px; display: grid; grid-template-columns: repeat(auto-fill, 340px); background: #fff; border: 1px solid #ddd; border-width: 0 1px; }
.card { height: 245px; }
.card h3 { margin: 0; font-size: 14px; font-weight: 400; line-height: 16px; color: #000; }
.plot { width: 300px; height: 170px; font: 12px "Liberation Sans", sans-serif; }
.plot text { fill: #32313f; }
.grid { stroke: #000; stroke-opacity: .2; fill: none; }
.axis-line { stroke: #000; stroke-opacity: .2; fill: none; }
.series { fill: none; stroke: #f7cb4d; stroke-width: 2; stroke-linejoin: round; }
.dot { fill: #f7cb4d; }
.card-actions { display: flex; align-items: center; gap: 19px; margin-top: 9px; }

.scroll-thumb { position: absolute; z-index: 2; right: 1px; top: 64px; width: 9px; height: 206px; border-radius: 5px; background: #8b8b8b; border: 1px solid #777; }
```
FILE: charts.js
```js
// Each chart: tag lines, grid spacing and first line (plot pixels),
// first label line, labels (every second line), and smoothed points.
const charts = [
  { tag: ["1", "biases"], step: 10.38, first: 0, label: 2,
    ticks: ["9.990e-4", "9.970e-4", "9.950e-4", "9.930e-4", "9.910e-4", "9.890e-4"],
    points: "20,10.7 60,10.5 80,10.2 90,9.6 105,9.6 115,10.4 120,11 132,11.6 140,14 147,17.500 153,22 160,29.5 166,33.5 171,35 176,39.5 180,51 184,70 188,89 192,106 195,115.5" },
  { tag: ["1", "weights"], step: 15, first: 0, label: 2,
    ticks: ["1.003e-3", "1.002e-3", "1.001e-3", "1.000e-3"],
    points: "20,120 40,120 60,118.5 80,116.3 100,114 115,112.5 120,111 130,108.8 140,107 145,105.7 150,105 155,106 160,107 165,106.5 170,100 175,92 180,86.5 185,83 190,66 195,32.5" },
  { tag: ["2", "biases"], step: 15, first: 15, label: 1,
    ticks: ["9.950e-4", "9.850e-4", "9.750e-4", "9.650e-4"],
    points: "20,15 95,15 105,16.5 120,18.5 130,19.5 137,22 144,25.500 150,31 155,37 160,43 165,47 170,50 175,55 180,65 185,84 190,106 195,125.5" },
  { tag: ["2", "weights"], step: 12.27, first: 12.27, label: 1,
    ticks: ["1.016e-3", "1.012e-3", "1.008e-3", "1.004e-3", "1.000e-3"],
    points: "20,122.5 35,122.5 45,121.5 60,118.5 80,114 90,111.5 100,109.5 115,105.5 120,103.5 130,99 140,95.5 145,93 150,92 155,92.5 160,93 165,91 170,83.5 175,75 180,67 185,61.5 190,44 195,6" },
  { tag: ["3", "biases"], step: 15, first: 15, label: 1,
    ticks: ["9.950e-4", "9.850e-4", "9.750e-4", "9.650e-4"],
    points: "20,15 90,15 100,16.5 110,19 120,20 130,21.3 140,26 150,35 160,51 165,55.5 170,56.5 175,60 180,69 185,89 190,107 195,119" },
  { tag: ["3", "weights"], step: 11.25, first: 0, label: 1,
    ticks: ["1.020e-3", "1.016e-3", "1.012e-3", "1.008e-3", "1.004e-3", "1.000e-3"],
    points: "20,124 35,124 45,122.5 60,120 70,117.5 80,115 95,110 115,104 130,97.5 140,92.5 150,87 160,85 165,81.5 170,73.5 175,64 180,56 185,51 190,36 195,9" },
  { tag: ["4", "biases"], step: 12.27, first: 0, label: 2,
    ticks: ["9.900e-4", "9.700e-4", "9.500e-4", "9.300e-4", "9.100e-4"],
    points: "20,12 92,12 100,13.5 110,16 120,17 130,18 140,22 145,25 150,29.5 160,46.5 165,51 170,51.5 175,53.5 180,61 185,80 190,97 195,107.5" },
  { tag: ["4", "weights"], step: 16.87, first: 0, label: 1,
    ticks: ["1.012e-3", "1.008e-3", "1.004e-3", "1.000e-3"],
    points: "20,118 35,117.5 42,116 50,113.5 60,110 70,105.5 80,101 92,94 105,88 115,82 125,74 135,68 145,62 150,60.5 155,62.5 160,65 165,63.5 170,54 175,45 180,39 185,43.5 190,32 195,4",
    raw: "155,62 160,67 165,62 175,42 180,38 190,53 195,4" },
  { tag: ["5", "biases"], step: 16.87, first: 0, label: 1,
    ticks: ["1.000e-3", "9.600e-4", "9.200e-4", "8.800e-4"],
    points: "20,17 40,16.5 60,14.5 75,13 90,10.5 100,12 115,14.5 130,13 140,17.5 145,21 150,26 155,36 160,47 165,53 170,50.5 175,50.5 180,58 185,82 190,102 195,115",
    raw: "150,26 160,53 165,55 175,46 180,60 190,124 195,115" },
  { tag: ["5", "weights"], step: 10.38, first: 0, label: 2,
    ticks: ["1.009e-3", "1.007e-3", "1.005e-3", "1.003e-3", "1.001e-3"],
    points: "20,124 80,110 140,90 180,68 190,52 195,18" },
  { tag: ["6", "biases"], step: 13.5, first: 0, label: 1,
    ticks: ["1.000e-3", "9.800e-4", "9.600e-4", "9.400e-4", "9.200e-4"],
    points: "20,14 35,14 45,13 92,12.7 100,15.5 115,21 130,20.5 140,25.5 150,33 170,70 195,115" },
  { tag: ["6", "weights"], step: 13.5, first: 0, label: 1,
    ticks: ["1.007e-3", "1.005e-3", "1.003e-3", "1.001e-3"],
    points: "20,124 80,100 140,60 165,40 175,26 180,19.5 185,34 190,40 195,23.5" }
];

const LEFT = 89.5, TOP = 10, WIDTH = 200, HEIGHT = 135;

function plot(chart) {
  let grid = "";
  for (let x = 0; x <= WIDTH; x += 20) grid += `M${x} 0V${HEIGHT + 5}`;
  for (let y = chart.first; y < HEIGHT + 1; y += chart.step) grid += `M-5 ${y}H${WIDTH}`;
  const ylabels = chart.ticks.map((t, i) => {
    const y = chart.first + (chart.label + 2 * i) * chart.step;
    return `<text x="-10" y="${Math.floor(y) + 4}" text-anchor="end">${t}</text>`;
  }).join("");
  const xlabels = ["0.000", "6.000k", "12.00k"].map((t, i) =>
    `<text x="${20 + 60 * i}" y="154" text-anchor="middle">${t}</text>`).join("");
  const raw = chart.raw ? `<polyline class="series" opacity="0.25" points="${chart.raw}"/>` : "";
  const [cx, cy] = chart.points.split(" ").pop().split(",");
  return `<svg class="plot"><g transform="translate(${LEFT} ${TOP})">
    <path class="grid" d="${grid}"/>
    <path class="axis-line" d="M0 0V${HEIGHT}M-5 ${HEIGHT}H${WIDTH}"/>
    ${raw}<polyline class="series" points="${chart.points}"/>
    <circle class="dot" cx="${cx}" cy="${cy}" r="4"/>${ylabels}${xlabels}</g></svg>`;
}

document.getElementById("cards").innerHTML = charts.map(chart => {
  const [n, kind] = chart.tag;
  return `<article class="card">
    <h3>HyperSGD/update_Stack/convolution_${n}/<br>${kind}/a_Stack/convolution_${n}/${kind}_0</h3>
    ${plot(chart)}
    <div class="card-actions">
      <button aria-label="Enlarge"><svg width="14" height="14" viewBox="0 0 14 14"><path d="M1 5V1H5M9 1H13V5M13 9V13H9M5 13H1V9" fill="none" stroke="#2196f3" stroke-width="2"/></svg></button>
      <button aria-label="Toggle log scale"><svg width="18" height="16" viewBox="0 0 18 16"><path d="M0 0H18V4H0ZM0 6H18V9H0ZM0 11H18V13H0ZM0 15H18V16H0Z" fill="#2196f3"/></svg></button>
    </div>
  </article>`;
}).join("");
```
